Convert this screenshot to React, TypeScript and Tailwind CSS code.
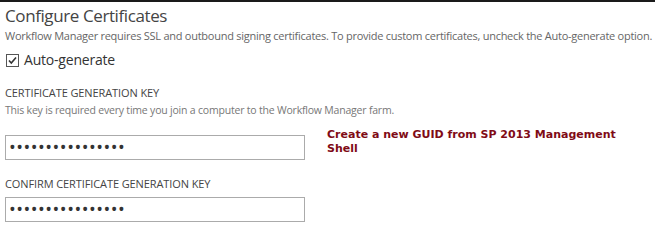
import React from "react"

const font = { fontFamily: '"Open Sans", "Noto Sans", sans-serif' }

const PasswordBox = () => (
  <input
    type="password"
    readOnly
    defaultValue="abcdefghijklmnop"
    className="h-[25px] w-[300px] border border-[#ababab] bg-white px-[3px] text-[18px] tracking-[0.5px] text-[#333] outline-none"
  />
)

const App = () => {
  return (
    <div className="h-[239px] w-[655px] overflow-hidden bg-white" style={font}>
      <div className="h-[2px] bg-[#1a1a1a]" />
      <div className="px-[5px]">
        <h1 className="mt-[3px] text-[17px] leading-[22px] font-medium tracking-[-0.4px] text-[#444]">
          Configure Certificates
        </h1>
        <p className="mt-[2px] text-[11px] leading-[14px] tracking-[-0.26px] whitespace-nowrap text-[#666]">
          Workflow Manager requires SSL and outbound signing certificates. To provide custom certificates, uncheck the
          Auto-generate option.
        </p>
        <label className="mt-[8px] flex items-center gap-[5px] text-[14px] leading-[18px] tracking-[-0.2px] text-[#333]">
          <span className="ml-[1px] flex h-[13px] w-[13px] items-center justify-center border border-[#555] bg-white">
            <svg width="11" height="11" viewBox="0 0 11 11">
              <path d="M2 5.5 L4.3 8 L9 2.5" fill="none" stroke="#333" strokeWidth="1.6" />
            </svg>
          </span>
          Auto-generate
        </label>

        <div className="mt-[17px] text-[11px] leading-[14px] tracking-[-0.1px] text-[#444]">CERTIFICATE GENERATION KEY</div>
        <p className="mt-[3px] text-[10.5px] leading-[14px] tracking-[-0.2px] text-[#777]">
          This key is required every time you join a computer to the Workflow Manager farm.
        </p>
        <div className="mt-[18px] flex items-start gap-[22px]">
          <PasswordBox />
          <p
            className="-mt-[7px] w-[320px] text-[11px] leading-[14px] font-bold text-[#7f0b16]"
            style={{ fontFamily: '"DejaVu Sans", Verdana, sans-serif' }}
          >
            Create a new GUID from SP 2013 Management Shell
          </p>
        </div>

        <div className="mt-[17px] text-[11px] leading-[14px] tracking-[-0.1px] text-[#444]">
          CONFIRM CERTIFICATE GENERATION KEY
        </div>
        <div className="mt-[6px]">
          <PasswordBox />
        </div>
      </div>
    </div>
  )
}

export default App
